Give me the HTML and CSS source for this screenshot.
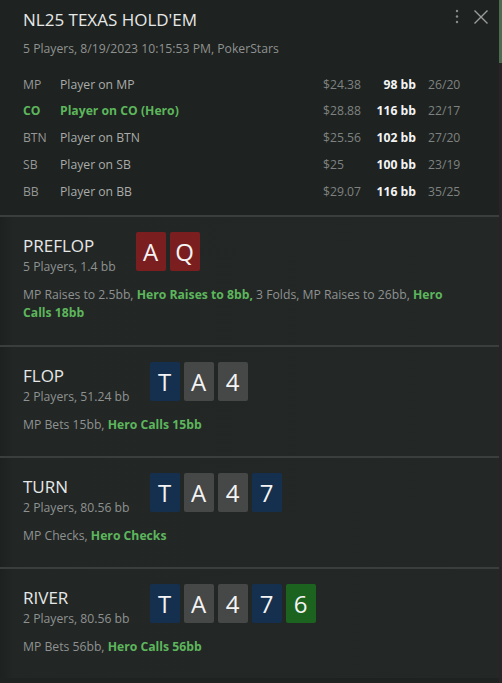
FILE: index.html
```html
<!DOCTYPE html>
<html>
<head>
<meta charset="utf-8">
<link rel="stylesheet" href="styles.css">
</head>
<body>
<div class="panel">
  <header class="head">
    <div class="head-top">
      <h1 class="title">NL25 TEXAS HOLD'EM</h1>
      <div class="tools">
        <svg class="icon-dots" width="4" height="16" viewBox="0 0 4 16"><circle cx="2" cy="2" r="1.2"/><circle cx="2" cy="7.5" r="1.2"/><circle cx="2" cy="13" r="1.2"/></svg>
        <svg class="icon-x" width="16" height="16" viewBox="0 0 16 16"><path d="M1.5 1.5 L14.5 14.5 M14.5 1.5 L1.5 14.5"/></svg>
      </div>
    </div>
    <div class="sub">5 Players, 8/19/2023 10:15:53 PM, PokerStars</div>
    <div class="players">
      <div class="row"><span class="pos">MP</span><span class="name">Player on MP</span><span class="money">$24.38</span><span class="bb">98 bb</span><span class="stat">26/20</span></div>
      <div class="row hero"><span class="pos">CO</span><span class="name">Player on CO (Hero)</span><span class="money">$28.88</span><span class="bb">116 bb</span><span class="stat">22/17</span></div>
      <div class="row"><span class="pos">BTN</span><span class="name">Player on BTN</span><span class="money">$25.56</span><span class="bb">102 bb</span><span class="stat">27/20</span></div>
      <div class="row"><span class="pos">SB</span><span class="name">Player on SB</span><span class="money">$25</span><span class="bb">100 bb</span><span class="stat">23/19</span></div>
      <div class="row"><span class="pos">BB</span><span class="name">Player on BB</span><span class="money">$29.07</span><span class="bb">116 bb</span><span class="stat">35/25</span></div>
    </div>
  </header>

  <section class="street">
    <div class="street-head">
      <div class="street-info">
        <div class="street-name">PREFLOP</div>
        <div class="street-sub">5 Players, 1.4 bb</div>
      </div>
      <div class="cards"><span class="card red">A</span><span class="card red">Q</span></div>
    </div>
    <p class="actions"><span>MP Raises to 2.5bb, </span><b>Hero Raises to 8bb,</b><span> 3 Folds, MP Raises to 26bb, </span><b>Hero</b> <b>Calls 18bb</b></p>
  </section>

  <section class="street">
    <div class="street-head">
      <div class="street-info">
        <div class="street-name">FLOP</div>
        <div class="street-sub">2 Players, 51.24 bb</div>
      </div>
      <div class="cards"><span class="card blue">T</span><span class="card gray">A</span><span class="card gray">4</span></div>
    </div>
    <p class="actions"><span>MP Bets 15bb, </span><b>Hero Calls 15bb</b></p>
  </section>

  <section class="street">
    <div class="street-head">
      <div class="street-info">
        <div class="street-name">TURN</div>
        <div class="street-sub">2 Players, 80.56 bb</div>
      </div>
      <div class="cards"><span class="card blue">T</span><span class="card gray">A</span><span class="card gray">4</span><span class="card blue">7</span></div>
    </div>
    <p class="actions"><span>MP Checks, </span><b>Hero Checks</b></p>
  </section>

  <section class="street">
    <div class="street-head">
      <div class="street-info">
        <div class="street-name">RIVER</div>
        <div class="street-sub">2 Players, 80.56 bb</div>
      </div>
      <div class="cards"><span class="card blue">T</span><span class="card gray">A</span><span class="card gray">4</span><span class="card blue">7</span><span class="card green">6</span></div>
    </div>
    <p class="actions"><span>MP Bets 56bb, </span><b>Hero Calls 56bb</b></p>
  </section>

  <div class="scrollbar"><div class="thumb"></div></div>
</div>
</body>
</html>
```

FILE: styles.css
```css
html, body {
  margin: 0;
  padding: 0;
  background: #1e2220;
}
body {
  font-family: "Open Sans", "Noto Sans", sans-serif;
  color: #a0a3a2;
  width: 502px;
  height: 683px;
  overflow: hidden;
}
.panel {
  position: relative;
  height: 683px;
  background: #1e2220;
}
.head {
  padding: 8px 0 10px 23px;
}
.head-top {
  display: flex;
  justify-content: space-between;
  align-items: flex-start;
}
.title {
  margin: 0;
  font-size: 17px;
  font-weight: 400;
  line-height: 24px;
  color: #e6e8e7;
}
.tools {
  display: flex;
  align-items: center;
  gap: 14px;
  padding: 1px 13px 0 0;
}
.icon-dots {
  fill: #8a8d8c;
}
.icon-x {
  stroke: #9a9d9c;
  stroke-width: 1.4;
  fill: none;
}
.sub {
  margin-top: 7px;
  font-size: 12.2px;
  line-height: 20px;
  color: #8f9291;
}
.players {
  margin-top: 12.5px;
}
.row {
  display: grid;
  grid-template-columns: 37px 263px 52px 41px auto;
  font-size: 12.2px;
  line-height: 26.75px;
}
.pos { color: #959897; }
.name { color: #a9acab; }
.money { color: #7f8281; }
.bb {
  text-align: right;
  color: #f3f4f4;
  font-weight: 700;
}
.stat {
  padding-left: 12px;
  color: #7f8281;
}
.row.hero .pos,
.row.hero .name {
  color: #5db65c;
  font-weight: 700;
}
.street {
  border-top: 2px solid #3a3e3d;
  background: linear-gradient(to right, #1d2120 0px, #222625 14px, #232827 100%);
  padding: 15px 30px 22px 23px;
}
.street:first-of-type {
  padding-bottom: 23px;
}
.street-head {
  display: flex;
  align-items: flex-start;
  gap: 20px;
}
.street-info {
  padding-top: 3px;
}
.street-name {
  font-size: 17px;
  line-height: 22px;
  color: #e6e8e7;
}
.street-sub {
  font-size: 12.2px;
  line-height: 20px;
  color: #8f9291;
}
.cards {
  display: flex;
  gap: 4px;
}
.card {
  width: 30px;
  height: 39px;
  border-radius: 2px;
  display: flex;
  align-items: center;
  justify-content: center;
  font-size: 24px;
  line-height: 1;
  color: #f4f4f4;
}
.card.red { background: #7b1e1f; }
.card.blue { background: #15304e; }
.card.gray { background: #464747; }
.card.green { background: #1d6320; }
.actions {
  margin: 9px 0 0;
  font-size: 12.2px;
  line-height: 18px;
  color: #8f9291;
}
.actions b {
  color: #5db65c;
  font-weight: 700;
}
.scrollbar {
  position: absolute;
  top: 0;
  right: 0;
  width: 3px;
  height: 683px;
  background: #2a2325;
}
.thumb {
  height: 63px;
  background: #4e6a50;
}
```
